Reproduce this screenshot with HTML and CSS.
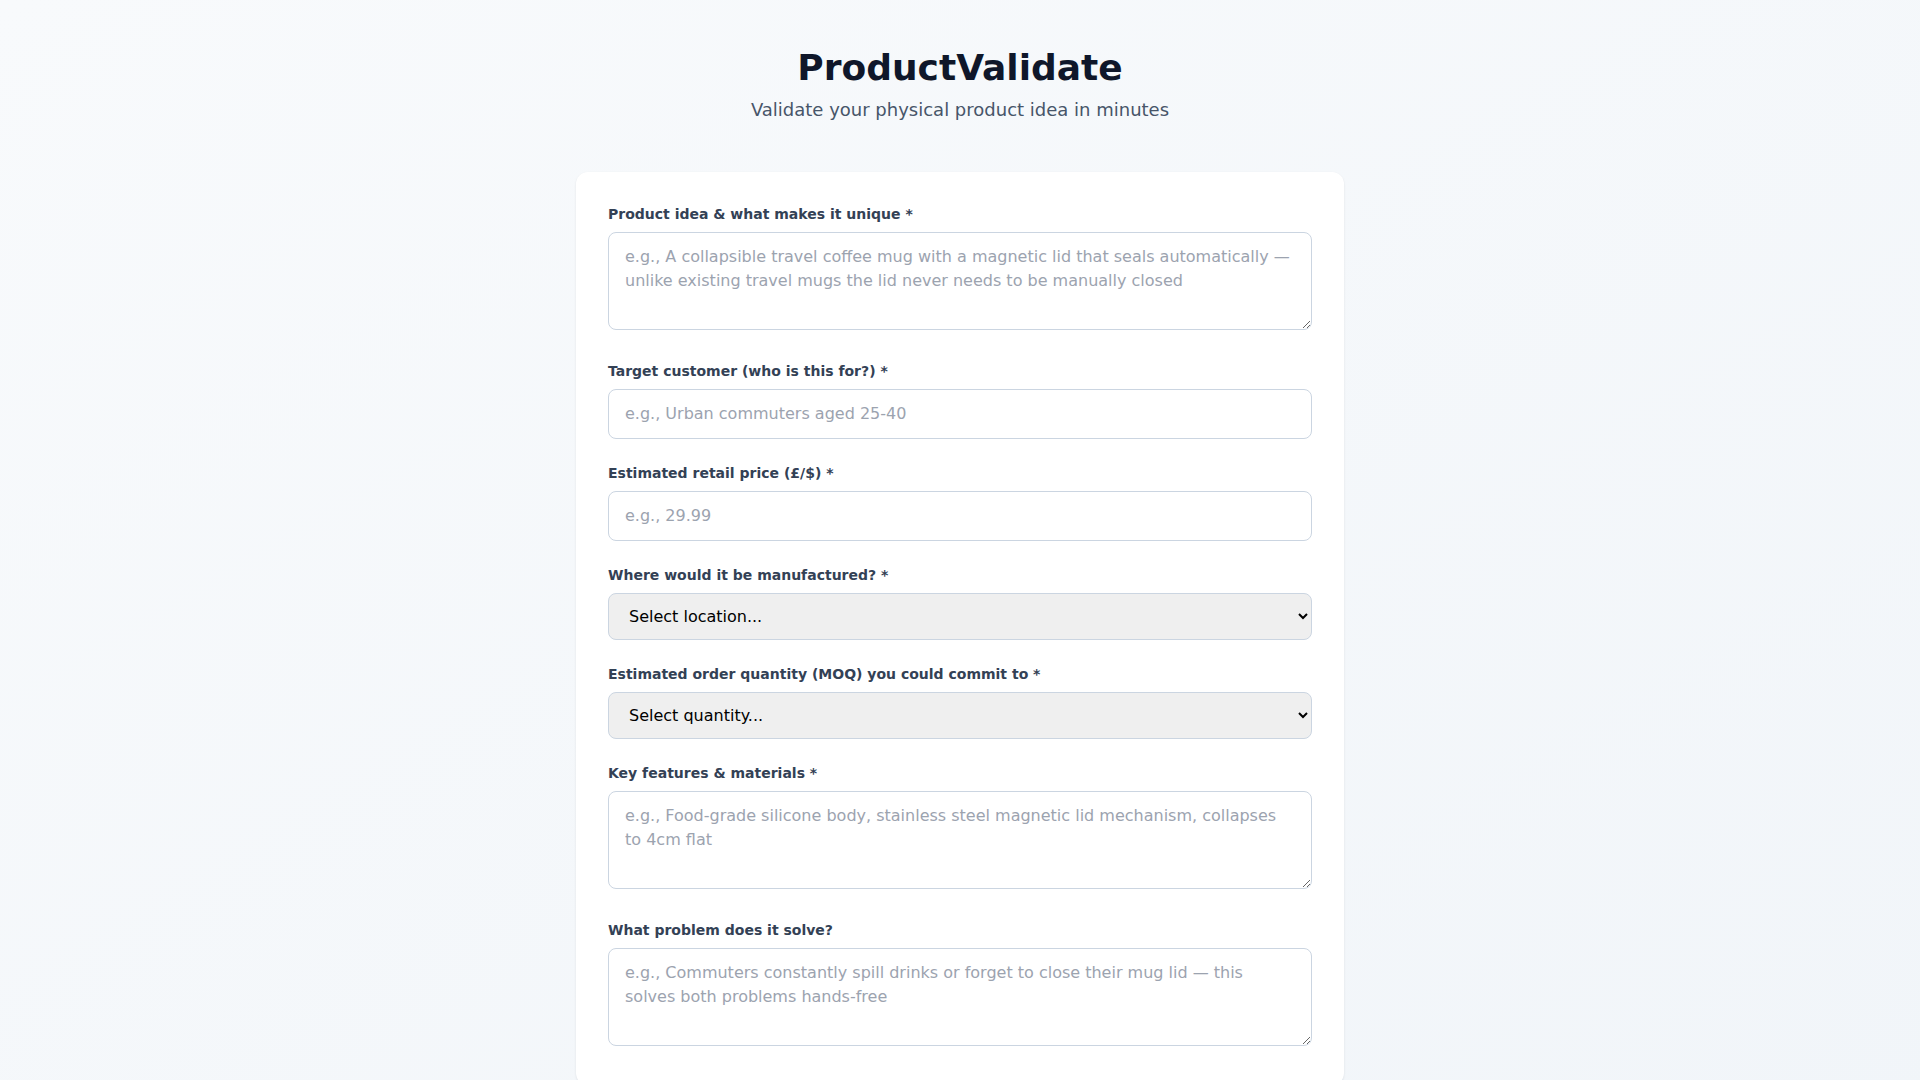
FILE: index.html
```html
<!DOCTYPE html>
<html lang="en">
<head>
<meta charset="utf-8">
<title>ProductValidate</title>
<link rel="stylesheet" href="styles.css">
</head>
<body>
<div class="page">
  <header class="header">
    <h1 class="title">ProductValidate</h1>
    <p class="subtitle">Validate your physical product idea in minutes</p>
  </header>
  <form class="card">
    <div class="field">
      <label class="label">Product idea &amp; what makes it unique *</label>
      <textarea class="control" rows="3" placeholder="e.g., A collapsible travel coffee mug with a magnetic lid that seals automatically — unlike existing travel mugs the lid never needs to be manually closed"></textarea>
    </div>
    <div class="field">
      <label class="label">Target customer (who is this for?) *</label>
      <input class="control" type="text" placeholder="e.g., Urban commuters aged 25-40">
    </div>
    <div class="field">
      <label class="label">Estimated retail price (£/$) *</label>
      <input class="control" type="text" placeholder="e.g., 29.99">
    </div>
    <div class="field">
      <label class="label">Where would it be manufactured? *</label>
      <select class="control select">
        <option>Select location...</option>
        <option>China</option>
        <option>UK</option>
        <option>USA</option>
      </select>
    </div>
    <div class="field">
      <label class="label">Estimated order quantity (MOQ) you could commit to *</label>
      <select class="control select">
        <option>Select quantity...</option>
        <option>100-500</option>
        <option>500-1000</option>
      </select>
    </div>
    <div class="field">
      <label class="label">Key features &amp; materials *</label>
      <textarea class="control" rows="3" placeholder="e.g., Food-grade silicone body, stainless steel magnetic lid mechanism, collapses to 4cm flat"></textarea>
    </div>
    <div class="field">
      <label class="label">What problem does it solve?</label>
      <textarea class="control" rows="3" placeholder="e.g., Commuters constantly spill drinks or forget to close their mug lid — this solves both problems hands-free"></textarea>
    </div>
  </form>
</div>
</body>
</html>
```

FILE: styles.css
```css
* {
  box-sizing: border-box;
}

html, body {
  margin: 0;
  padding: 0;
}

body {
  min-height: 100vh;
  font-family: "DejaVu Sans", sans-serif;
  font-size: 16px;
  line-height: 24px;
  color: #0f172a;
  background: linear-gradient(to bottom right, #f8fafc, #f1f5f9);
}

.page {
  max-width: 768px;
  margin: 0 auto;
  padding: 48px 0 48px;
}

.header {
  text-align: center;
  margin-bottom: 48px;
}

.title {
  margin: 0;
  font-size: 36px;
  line-height: 40px;
  font-weight: 700;
  color: #0f172a;
}

.subtitle {
  margin: 8px 0 0;
  font-size: 18px;
  line-height: 28px;
  color: #475569;
}

.card {
  background: #ffffff;
  border-radius: 12px;
  padding: 32px;
  box-shadow: 0 1px 3px rgba(15, 23, 42, 0.06), 0 1px 2px rgba(15, 23, 42, 0.04);
  display: flex;
  flex-direction: column;
  gap: 24px;
}

.field {
  font-size: 16px;
  line-height: 24px;
}

.label {
  display: block;
  margin-bottom: 8px;
  font-size: 14px;
  line-height: 20px;
  font-weight: 700;
  color: #334155;
}

.control {
  width: 100%;
  margin: 0;
  padding: 12px 16px;
  border: 1px solid #cbd5e1;
  border-radius: 8px;
  font-family: "DejaVu Sans", sans-serif;
  font-size: 16px;
  line-height: 24px;
  color: #0f172a;
  background: #ffffff;
  outline: none;
}

textarea.control {
  resize: vertical;
  vertical-align: baseline;
}

input.control {
  display: block;
}

.control::placeholder {
  color: #9ca3af;
  opacity: 1;
}

.select {
  display: block;
  background-color: #efefef;
  color: #000000;
  padding: 12px 16px;
}
```
